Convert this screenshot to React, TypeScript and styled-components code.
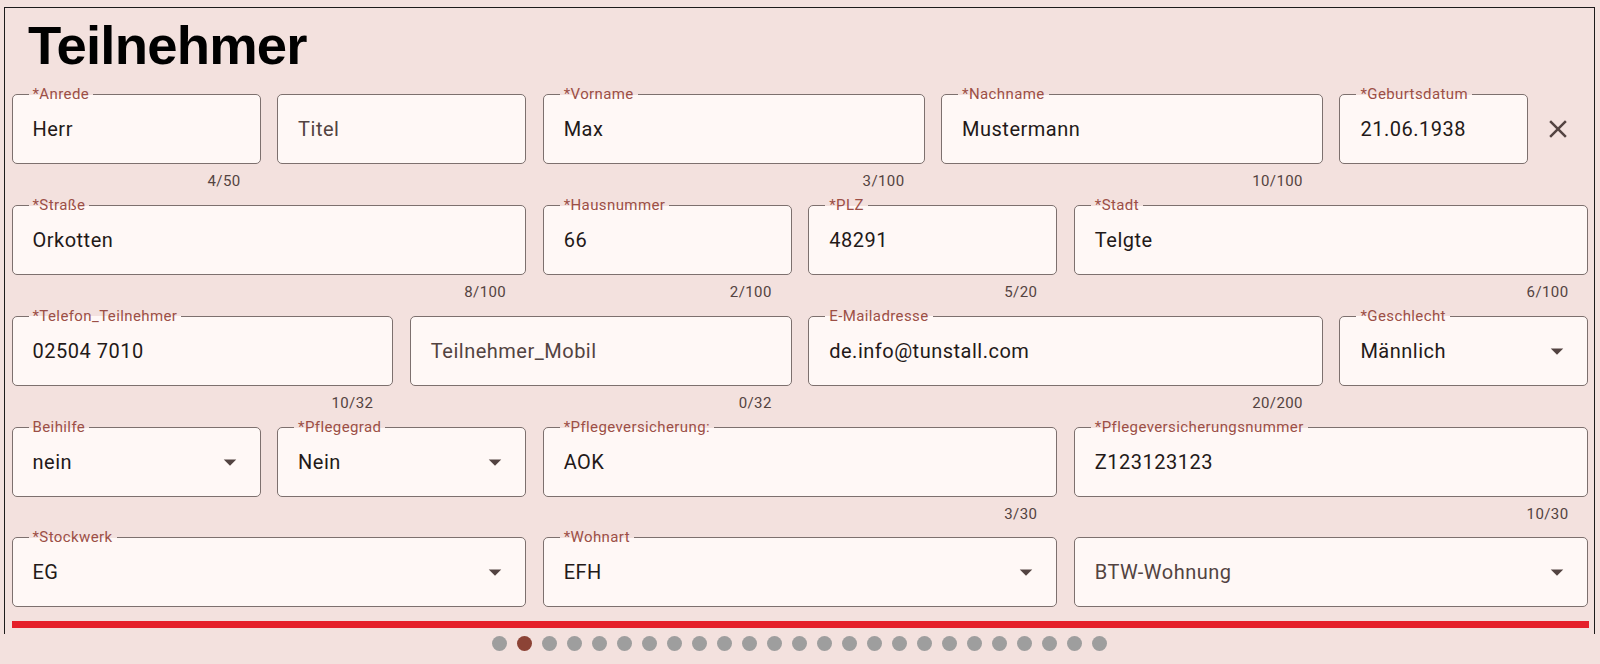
import styled, { createGlobalStyle } from "styled-components";

const GlobalStyle = createGlobalStyle`
  html, body {
    margin: 0;
    padding: 0;
    background: #f3e1de;
  }
  * { box-sizing: border-box; }
`;

type FieldType = {
  label?: string;
  value?: string;
  placeholder?: string;
  counter?: string;
  span: number;
  select?: boolean;
  clear?: boolean;
};

const rows: FieldType[] = [
  { label: "*Anrede", value: "Herr", counter: "4/50", span: 2 },
  { placeholder: "Titel", span: 2 },
  { label: "*Vorname", value: "Max", counter: "3/100", span: 3 },
  { label: "*Nachname", value: "Mustermann", counter: "10/100", span: 3 },
  { label: "*Geburtsdatum", value: "21.06.1938", span: 2, clear: true },

  { label: "*Straße", value: "Orkotten", counter: "8/100", span: 4 },
  { label: "*Hausnummer", value: "66", counter: "2/100", span: 2 },
  { label: "*PLZ", value: "48291", counter: "5/20", span: 2 },
  { label: "*Stadt", value: "Telgte", counter: "6/100", span: 4 },

  { label: "*Telefon_Teilnehmer", value: "02504 7010", counter: "10/32", span: 3 },
  { placeholder: "Teilnehmer_Mobil", counter: "0/32", span: 3 },
  { label: "E-Mailadresse", value: "de.info@tunstall.com", counter: "20/200", span: 4 },
  { label: "*Geschlecht", value: "Männlich", span: 2, select: true },

  { label: "Beihilfe", value: "nein", span: 2, select: true },
  { label: "*Pflegegrad", value: "Nein", span: 2, select: true },
  { label: "*Pflegeversicherung:", value: "AOK", counter: "3/30", span: 4 },
  { label: "*Pflegeversicherungsnummer", value: "Z123123123", counter: "10/30", span: 4 },

  { label: "*Stockwerk", value: "EG", span: 4, select: true },
  { label: "*Wohnart", value: "EFH", span: 4, select: true },
  { placeholder: "BTW-Wohnung", span: 4, select: true },
];

const ArrowIcon = () => (
  <svg width="30" height="30" viewBox="0 0 24 24" fill="#534341">
    <path d="M7 10l5 5 5-5z" />
  </svg>
);

const CloseIcon = () => (
  <svg width="30" height="30" viewBox="0 0 24 24" fill="#534341">
    <path d="M19 6.41L17.59 5 12 10.59 6.41 5 5 6.41 10.59 12 5 17.59 6.41 19 12 13.41 17.59 19 19 17.59 13.41 12z" />
  </svg>
);

const FormField = ({ field }: { field: FieldType }) => (
  <Cell $span={field.span}>
    <FieldRow>
      <Box>
        {field.label && <Label>{field.label}</Label>}
        <Value $placeholder={!field.value}>{field.value ?? field.placeholder}</Value>
        {field.select && (
          <Suffix>
            <ArrowIcon />
          </Suffix>
        )}
      </Box>
      {field.clear && (
        <ClearButton>
          <CloseIcon />
        </ClearButton>
      )}
    </FieldRow>
    {field.counter && <Counter>{field.counter}</Counter>}
  </Cell>
);

const App = () => {
  const dots = Array.from({ length: 25 }, (_, i) => i);
  return (
    <>
      <GlobalStyle />
      <Page>
        <Frame>
          <Title>Teilnehmer</Title>
          <Grid>
            {rows.map((f, i) => (
              <FormField key={i} field={f} />
            ))}
          </Grid>
          <RedBar />
        </Frame>
        <Dots>
          {dots.map(i => (
            <Dot key={i} $active={i === 1} />
          ))}
        </Dots>
      </Page>
    </>
  );
};

const Page = styled.main`
  padding: 7px 5px 0 4px;
  width: 1600px;
  height: 664px;
  overflow: hidden;
  font-family: Roboto, "Noto Sans", sans-serif;
`;

const Frame = styled.section`
  border: 1.5px solid #1d1b1b;
  border-bottom: none;
  padding: 0 5.5px 6.5px 6.5px;
`;

const Title = styled.h1`
  margin: 8px 0 0 16.5px;
  font-family: "Liberation Sans", Arial, sans-serif;
  font-weight: 700;
  font-size: 54.5px;
  line-height: 60px;
  letter-spacing: -0.8px;
  color: #000;
`;

const Grid = styled.div`
  display: grid;
  grid-template-columns: repeat(12, 1fr);
  column-gap: 16.5px;
  row-gap: 13.75px;
  align-items: start;
  margin-top: 18.4px;
`;

const Cell = styled.div<{ $span: number }>`
  grid-column: span ${p => p.$span};
  display: flex;
  flex-direction: column;
  min-width: 0;
`;

const FieldRow = styled.div`
  display: flex;
  align-items: center;
`;

const Box = styled.div`
  position: relative;
  flex: 1;
  min-width: 0;
  height: 70px;
  display: flex;
  align-items: center;
  border: 1px solid #7d706e;
  border-radius: 5px;
  background: #fff8f6;
`;

const Label = styled.span`
  position: absolute;
  top: -10px;
  left: 16px;
  padding: 0 4px;
  height: 18px;
  line-height: 18px;
  font-size: 15px;
  letter-spacing: 0.4px;
  color: #9c4f46;
  white-space: nowrap;
  background: linear-gradient(to bottom, #f3e1de 0 9.5px, #fff8f6 9.5px);
`;

const Value = styled.span<{ $placeholder: boolean }>`
  flex: 1;
  padding: 0 20px;
  font-size: 20px;
  letter-spacing: 0.5px;
  color: ${p => (p.$placeholder ? "#534341" : "#231918")};
  white-space: nowrap;
  overflow: hidden;
`;

const Suffix = styled.span`
  width: 60px;
  display: flex;
  justify-content: center;
  align-items: center;
  flex-shrink: 0;
`;

const ClearButton = styled.span`
  width: 60px;
  height: 60px;
  display: flex;
  justify-content: center;
  align-items: center;
  flex-shrink: 0;
`;

const Counter = styled.div`
  margin-top: 7px;
  padding-right: 20px;
  line-height: 20px;
  font-size: 15px;
  letter-spacing: 0.4px;
  text-align: right;
  color: #534341;
`;

const RedBar = styled.div`
  margin-top: 14px;
  height: 6.5px;
  background: #e5202a;
`;

const Dots = styled.div`
  display: flex;
  justify-content: center;
  gap: 10px;
  margin-top: 1.5px;
`;

const Dot = styled.span<{ $active: boolean }>`
  width: 15px;
  height: 15px;
  border-radius: 50%;
  background: ${p => (p.$active ? "#8c4336" : "#9e9e9e")};
`;

export default App;
